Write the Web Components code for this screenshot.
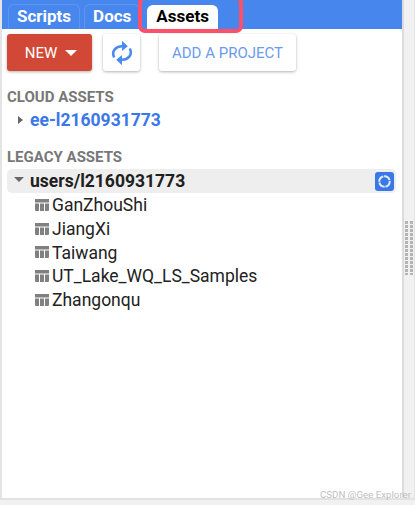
<!DOCTYPE html>
<html>
<head>
<meta charset="utf-8">
<style>
  html, body { margin: 0; height: 100%; overflow: hidden; background: #fff; }
  body { font-family: Roboto, "Liberation Sans", sans-serif; }
</style>
</head>
<body>
<asset-panel>
  <tab-bar slot="tabs">
    <tab-item>Scripts</tab-item>
    <tab-item>Docs</tab-item>
    <tab-item active>Assets</tab-item>
  </tab-bar>
  <tool-bar slot="tools"></tool-bar>
  <asset-section slot="content" heading="CLOUD ASSETS">
    <cloud-row>ee-l2160931773</cloud-row>
  </asset-section>
  <asset-section slot="content" heading="LEGACY ASSETS" style="margin-top:17px">
    <folder-row>users/l2160931773</folder-row>
    <table-row>GanZhouShi</table-row>
    <table-row>JiangXi</table-row>
    <table-row>Taiwang</table-row>
    <table-row>UT_Lake_WQ_LS_Samples</table-row>
    <table-row>Zhangonqu</table-row>
  </asset-section>
</asset-panel>

<script>
class AssetPanel extends HTMLElement {
  constructor() {
    super();
    this.attachShadow({ mode: 'open' });
    this.shadowRoot.innerHTML = `
      <style>
        :host { display: grid; grid-template-columns: 1fr 13px; grid-template-rows: 498px 7px; width: 415px; height: 505px; position: relative; overflow: hidden; }
        .main { border-left: 2px solid #e4e4e4; display: flex; flex-direction: column; min-width: 0; }
        .content { padding: 18px 6px 0 5px; display: flex; flex-direction: column; }
        .gutter { background: #f1f1f1; border-left: 2px solid #dcdcdc; border-right: 1px solid #e2e2e2; box-sizing: border-box; display: flex; align-items: center; justify-content: center; }
        .grip { width: 8px; height: 54px; margin-top: -3px; background-image: repeating-linear-gradient(90deg, #b4b4b4 0 3px, transparent 3px 5px); mask-image: repeating-linear-gradient(#000 0 3px, transparent 3px 4px); }
        .bottom { grid-column: 1 / 3; background: #f1f1f1; border-top: 2px solid #e2e2e2; box-sizing: border-box; }
        .mark { position: absolute; left: 138px; top: -4px; width: 97px; height: 29px; border: 4px solid #fb5068; border-radius: 7px; }
        .credit { position: absolute; right: 4px; bottom: 5px; font: 9.7px Roboto, "Liberation Sans", sans-serif; color: #c0c0c0; }
      </style>
      <div class="main">
        <slot name="tabs"></slot>
        <slot name="tools"></slot>
        <div class="content"><slot name="content"></slot></div>
      </div>
      <div class="gutter"><div class="grip"></div></div>
      <div class="bottom"></div>
      <div class="mark"></div>
      <div class="credit">CSDN @Gee Explorer</div>
    `;
  }
}

class TabBar extends HTMLElement {
  constructor() {
    super();
    this.attachShadow({ mode: 'open' });
    this.shadowRoot.innerHTML = `
      <style>
        :host { display: flex; align-items: flex-end; gap: 4px; height: 29px; padding-left: 6px; background: #4787ed; }
      </style>
      <slot></slot>
    `;
  }
}

class TabItem extends HTMLElement {
  constructor() {
    super();
    this.attachShadow({ mode: 'open' });
    this.shadowRoot.innerHTML = `
      <style>
        :host { display: block; box-sizing: border-box; height: 25px; padding: 0 8px; border: 1px solid #5d96ef; border-bottom: 0; border-radius: 6px 6px 0 0; font: 700 17px/22px Roboto, sans-serif; color: #fff; }
        :host([active]) { background: #fff; color: #000; border-color: #fff; height: 24px; line-height: 20px; margin-left: 3px; }
      </style>
      <slot></slot>
    `;
  }
}

class ToolBar extends HTMLElement {
  constructor() {
    super();
    this.attachShadow({ mode: 'open' });
    this.shadowRoot.innerHTML = `
      <style>
        :host { display: flex; gap: 11px; padding: 5px 0 0 5px; height: 37px; }
        button { box-sizing: border-box; height: 37px; border: 0; border-radius: 3px; background: #fff; box-shadow: 0 1px 3px rgba(0,0,0,.3); font: 400 15px Roboto, sans-serif; padding: 0; display: flex; align-items: center; justify-content: center; }
        .new { width: 85px; background: #d14836; color: #fff; gap: 8px; padding-left: 3px; }
        .new i { width: 0; height: 0; border: 6px solid transparent; border-top-color: #fff; border-bottom-width: 0; margin-top: 1px; }
        .sync { width: 37px; }
        .add { width: 137px; margin-left: 8px; color: #6a9bee; }
      </style>
      <button class="new">NEW<i></i></button>
      <button class="sync">
        <svg width="22" height="26" viewBox="0 0 22 26" fill="none">
          <path d="M3.2 17.5C0 11 5 6 11.5 6.3" stroke="#4b8bf0" stroke-width="2.6"/>
          <path d="M11 .8l5.8 5.5L11 11z" fill="#4b8bf0"/>
          <path d="M18.8 8.5C22 15 17 20 10.5 19.7" stroke="#4b8bf0" stroke-width="2.6"/>
          <path d="M11 25.2l-5.8-5.5L11 15z" fill="#4b8bf0"/>
        </svg>
      </button>
      <button class="add">ADD A PROJECT</button>
    `;
  }
}

class AssetSection extends HTMLElement {
  constructor() {
    super();
    this.attachShadow({ mode: 'open' });
    this.shadowRoot.innerHTML = `
      <style>
        :host { display: block; }
        h3 { margin: 0; font: 700 15px/16px Roboto, sans-serif; color: #777; }
      </style>
      <h3></h3>
      <slot></slot>
    `;
    this.shadowRoot.querySelector('h3').textContent = this.getAttribute('heading');
  }
}

class CloudRow extends HTMLElement {
  constructor() {
    super();
    this.attachShadow({ mode: 'open' });
    this.shadowRoot.innerHTML = `
      <style>
        :host { display: flex; align-items: center; height: 24px; margin-top: 3px; font: 700 17.5px/24px Roboto, sans-serif; color: #3b78e7; }
        i { width: 0; height: 0; border: 4.5px solid transparent; border-left: 5px solid #666; border-right: 0; margin: 0 7px 0 11px; }
      </style>
      <i></i><slot></slot>
    `;
  }
}

class FolderRow extends HTMLElement {
  constructor() {
    super();
    this.attachShadow({ mode: 'open' });
    this.shadowRoot.innerHTML = `
      <style>
        :host { display: flex; align-items: center; height: 24px; margin-top: 4px; background: #eee; border-radius: 5px; font: 700 17.5px/24px Roboto, sans-serif; color: #202020; }
        i { width: 0; height: 0; border: 5px solid transparent; border-top: 5px solid #666; border-bottom: 0; margin: -4px 6px 0 7px; }
        span { margin-left: auto; margin-right: 2px; width: 19px; height: 19px; border-radius: 3px; background: #3b78e7; display: flex; align-items: center; justify-content: center; }
      </style>
      <i></i><slot></slot>
      <span><svg width="15" height="15" viewBox="0 0 15 15" fill="none"><circle cx="7.5" cy="7.5" r="5.2" stroke="#dfeafc" stroke-width="2" stroke-dasharray="7 .8"/></svg></span>
    `;
  }
}

class TableRow extends HTMLElement {
  constructor() {
    super();
    this.attachShadow({ mode: 'open' });
    this.shadowRoot.innerHTML = `
      <style>
        :host { display: flex; align-items: center; gap: 3px; height: 23.8px; padding-left: 28px; font: 400 17.5px/24px Roboto, sans-serif; color: #222; }
        svg { display: block; }
      </style>
      <svg width="14" height="12" viewBox="0 0 14 12"><path fill="#808080" d="M0 0h14v3.5H0zM0 4.5h4V12H1a1 1 0 0 1-1-1zM5 4.5h4V12H5zM10 4.5h4V11a1 1 0 0 1-1 1h-3z"/></svg>
      <slot></slot>
    `;
  }
}

customElements.define('asset-panel', AssetPanel);
customElements.define('tab-bar', TabBar);
customElements.define('tab-item', TabItem);
customElements.define('tool-bar', ToolBar);
customElements.define('asset-section', AssetSection);
customElements.define('cloud-row', CloudRow);
customElements.define('folder-row', FolderRow);
customElements.define('table-row', TableRow);
</script>
</body>
</html>
